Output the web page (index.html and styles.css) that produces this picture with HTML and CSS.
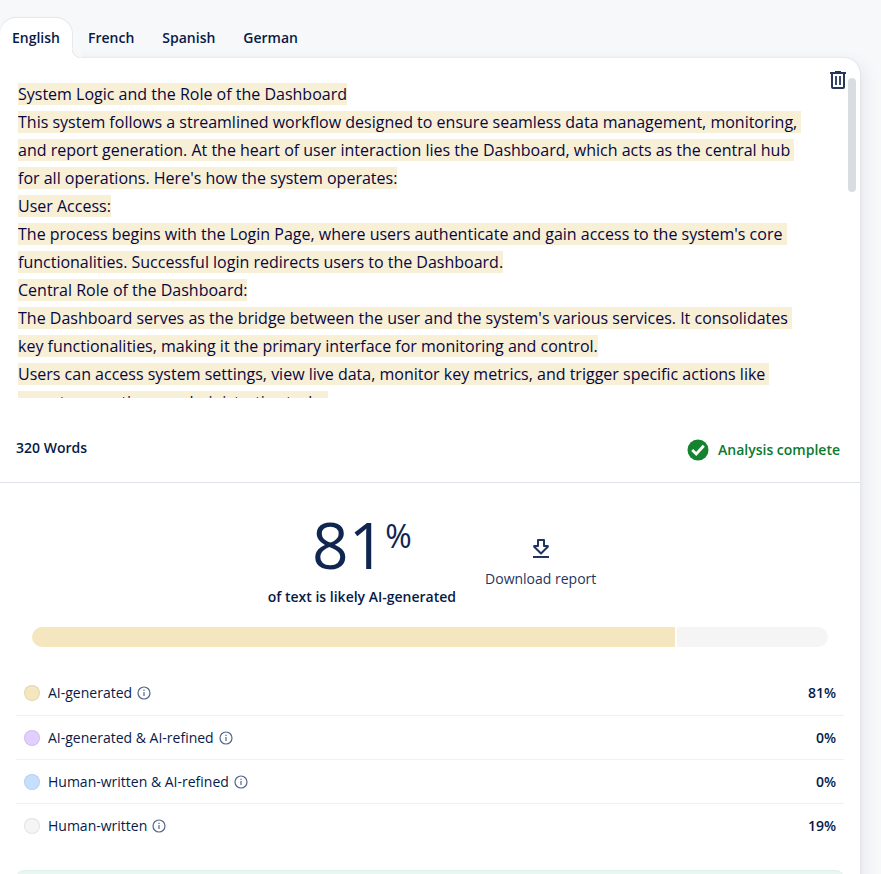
FILE: index.html
```html
<!DOCTYPE html>
<html lang="en">
<head>
<meta charset="utf-8">
<title>AI Detector</title>
<link rel="stylesheet" href="styles.css">
</head>
<body>
<svg class="sprite" aria-hidden="true">
  <symbol id="info" viewBox="0 0 14 14">
    <circle cx="7" cy="7" r="6" fill="none" stroke="currentColor" stroke-width="1.2"/>
    <path d="M7 6v4M7 3.8v1.2" stroke="currentColor" stroke-width="1.2"/>
  </symbol>
</svg>
<main class="detector">
  <nav class="tabs" aria-label="Language">
    <button class="tab tab-active" type="button">English</button>
    <button class="tab" type="button">French</button>
    <button class="tab" type="button">Spanish</button>
    <button class="tab" type="button">German</button>
  </nav>
  <section class="card">
    <div class="editor">
      <div class="text"><p><mark>System Logic and the Role of the Dashboard</mark></p><p><mark>This system follows a streamlined workflow designed to ensure seamless data management, monitoring, and report generation. At the heart of user interaction lies the Dashboard, which acts as the central hub for all operations. Here's how the system operates:</mark></p><p><mark>User Access:</mark></p><p><mark>The process begins with the Login Page, where users authenticate and gain access to the system's core functionalities. Successful login redirects users to the Dashboard.</mark></p><p><mark>Central Role of the Dashboard:</mark></p><p><mark>The Dashboard serves as the bridge between the user and the system's various services. It consolidates key functionalities, making it the primary interface for monitoring and control.</mark></p><p><mark>Users can access system settings, view live data, monitor key metrics, and trigger specific actions like report generation or administrative tasks.</mark></p></div>
      <button class="trash" type="button" aria-label="Delete text">
        <svg width="16" height="18" viewBox="0 0 16 18" fill="none" stroke="currentColor" stroke-width="2">
          <path d="M0 2h16M5 1h6M2 2v14q0 1 1 1h10q1 0 1-1V2"/>
          <path d="M6 5v9M10 5v9" stroke-width="1.8"/>
        </svg>
      </button>
      <div class="scroll-thumb"></div>
    </div>
    <div class="status">
      <span>320 Words</span>
      <span class="done">
        <svg width="22" height="22" viewBox="0 0 22 22" fill="none">
          <circle cx="11" cy="11" r="10.500" fill="#15832e"/>
          <path d="M5.200 11l4 4 7.600-8.200" stroke="#fff" stroke-width="2.800"/>
        </svg>
        Analysis complete
      </span>
    </div>
    <div class="summary">
      <div class="score">
        <div class="score-value">81<span class="percent">%</span></div>
        <div class="score-label">of text is likely AI-generated</div>
      </div>
      <button class="download" type="button">
        <svg width="16" height="20" viewBox="0 0 16 20" fill="none" stroke="currentColor" stroke-width="2">
          <path d="M5 2h6v6h3.800v.7L8 15.500 1.200 8.700V8H5z" stroke-linejoin="round"/>
          <path d="M0 19h16"/>
        </svg>
        Download report
      </button>
    </div>
    <div class="bar">
      <div class="bar-ai" style="flex-grow:81"></div>
      <div class="bar-human" style="flex-grow:19"></div>
    </div>
    <ul class="legend">
      <li><span class="dot dot-ai"></span>AI-generated<svg class="info"><use href="#info"/></svg><b>81%</b></li>
      <li><span class="dot dot-refined"></span>AI-generated &amp; AI-refined<svg class="info"><use href="#info"/></svg><b>0%</b></li>
      <li><span class="dot dot-mixed"></span>Human-written &amp; AI-refined<svg class="info"><use href="#info"/></svg><b>0%</b></li>
      <li><span class="dot dot-human"></span>Human-written<svg class="info"><use href="#info"/></svg><b>19%</b></li>
    </ul>
    <div class="notice"></div>
  </section>
</main>
</body>
</html>
```
FILE: styles.css
```css
* { box-sizing: border-box; }

body {
  margin: 0;
  height: 100vh;
  overflow: hidden;
  background: #f7f8fa;
  color: #071a48;
  font: 14px/20px "Open Sans", sans-serif;
}

button {
  border: 0;
  padding: 0;
  background: none;
  color: inherit;
  font: inherit;
}

.sprite { position: absolute; width: 0; height: 0; }

.detector { padding: 18px 21px 0 0; }

.tabs { display: flex; gap: 4px; }

.tab {
  height: 40px;
  padding: 0 12px;
  font-weight: 600;
}

.tab-active {
  position: relative;
  z-index: 1;
  background: #fff;
  border-radius: 16px 16px 0 0;
  box-shadow: 0 -1px 1px #e4e6ea, 1px 0 0 #e8eaed;
}

/* Concave foot joining the active tab to the card. */
.tab-active::before {
  content: "";
  position: absolute;
  left: 100%;
  bottom: 0;
  width: 10px;
  height: 10px;
  background: radial-gradient(circle at 100% 0, #f7f8fa 9px, #e6e8ec 10px, #fff 11px);
}

.card {
  padding-bottom: 16px;
  background: #fff;
  border-radius: 0 16px 0 0;
  box-shadow: 0 0 2px #d0d4da, 4px 4px 16px rgba(20, 40, 80, 0.08);
}

.editor { position: relative; padding: 22px 48px 0 18px; }

.text {
  height: 318px;
  overflow: hidden;
  font-size: 16px;
  line-height: 28px;
  white-space: pre-wrap;
}

.text p { margin: 0; }

.text mark { background: #f8efd7; color: #07073f; }

.trash {
  position: absolute;
  top: 13px;
  right: 14px;
  height: 18px;
  color: #253858;
}

.trash svg { display: block; }

.scroll-thumb {
  position: absolute;
  top: 20px;
  right: 4px;
  width: 8px;
  height: 114px;
  border-radius: 4px;
  background: #d9dce1;
}

.status {
  display: flex;
  justify-content: space-between;
  height: 85px;
  padding: 40px 20px 0 16px;
  border-bottom: 1px solid #dfe2e7;
  font-weight: 600;
}

.done {
  display: flex;
  align-items: center;
  gap: 9px;
  height: 24px;
  color: #0a7a2f;
}

.summary {
  display: flex;
  justify-content: center;
  gap: 29px;
  height: 144px;
  padding: 28px 0 0 4px;
}

.score { text-align: center; }

.score-value {
  display: flex;
  justify-content: center;
  height: 76px;
  font-size: 64px;
  line-height: 68px;
  color: #102550;
}

.percent { font-size: 32px; line-height: 50px; }

.score-label { font-weight: 600; }

.download {
  display: flex;
  flex-direction: column;
  align-items: center;
  align-self: flex-start;
  gap: 11px;
  padding-top: 27px;
  color: #1f3560;
}

.bar {
  display: flex;
  gap: 2px;
  height: 20px;
  margin: 0 32px;
  border-radius: 10px;
  overflow: hidden;
}

.bar-ai { background: #f4e7c0; }
.bar-human { background: #f5f5f5; }

.legend {
  margin: 24px 16px 0;
  padding: 0;
  list-style: none;
}

.legend li {
  display: flex;
  align-items: center;
  height: 44px;
  padding: 0 8px;
}

.legend li:first-child { height: 45px; }

.legend li:not(:last-child) { border-bottom: 1px solid #f0f1f3; }

.legend b { margin-left: auto; font-weight: 600; }

.dot {
  width: 16px;
  height: 16px;
  margin-right: 8px;
  border: 1px solid rgba(0, 0, 0, 0.07);
  border-radius: 50%;
}

.dot-ai { background: #f4e7c0; }
.dot-refined { background: #e2ceff; }
.dot-mixed { background: #c6dfff; }
.dot-human { background: #f5f5f5; }

.info {
  width: 14px;
  height: 14px;
  margin-left: 5px;
  color: #54658a;
}

.notice {
  height: 56px;
  margin: 22px 16px 0;
  border: 1px solid #e2eeea;
  border-radius: 8px;
  background: #e6f8f2;
}
```
